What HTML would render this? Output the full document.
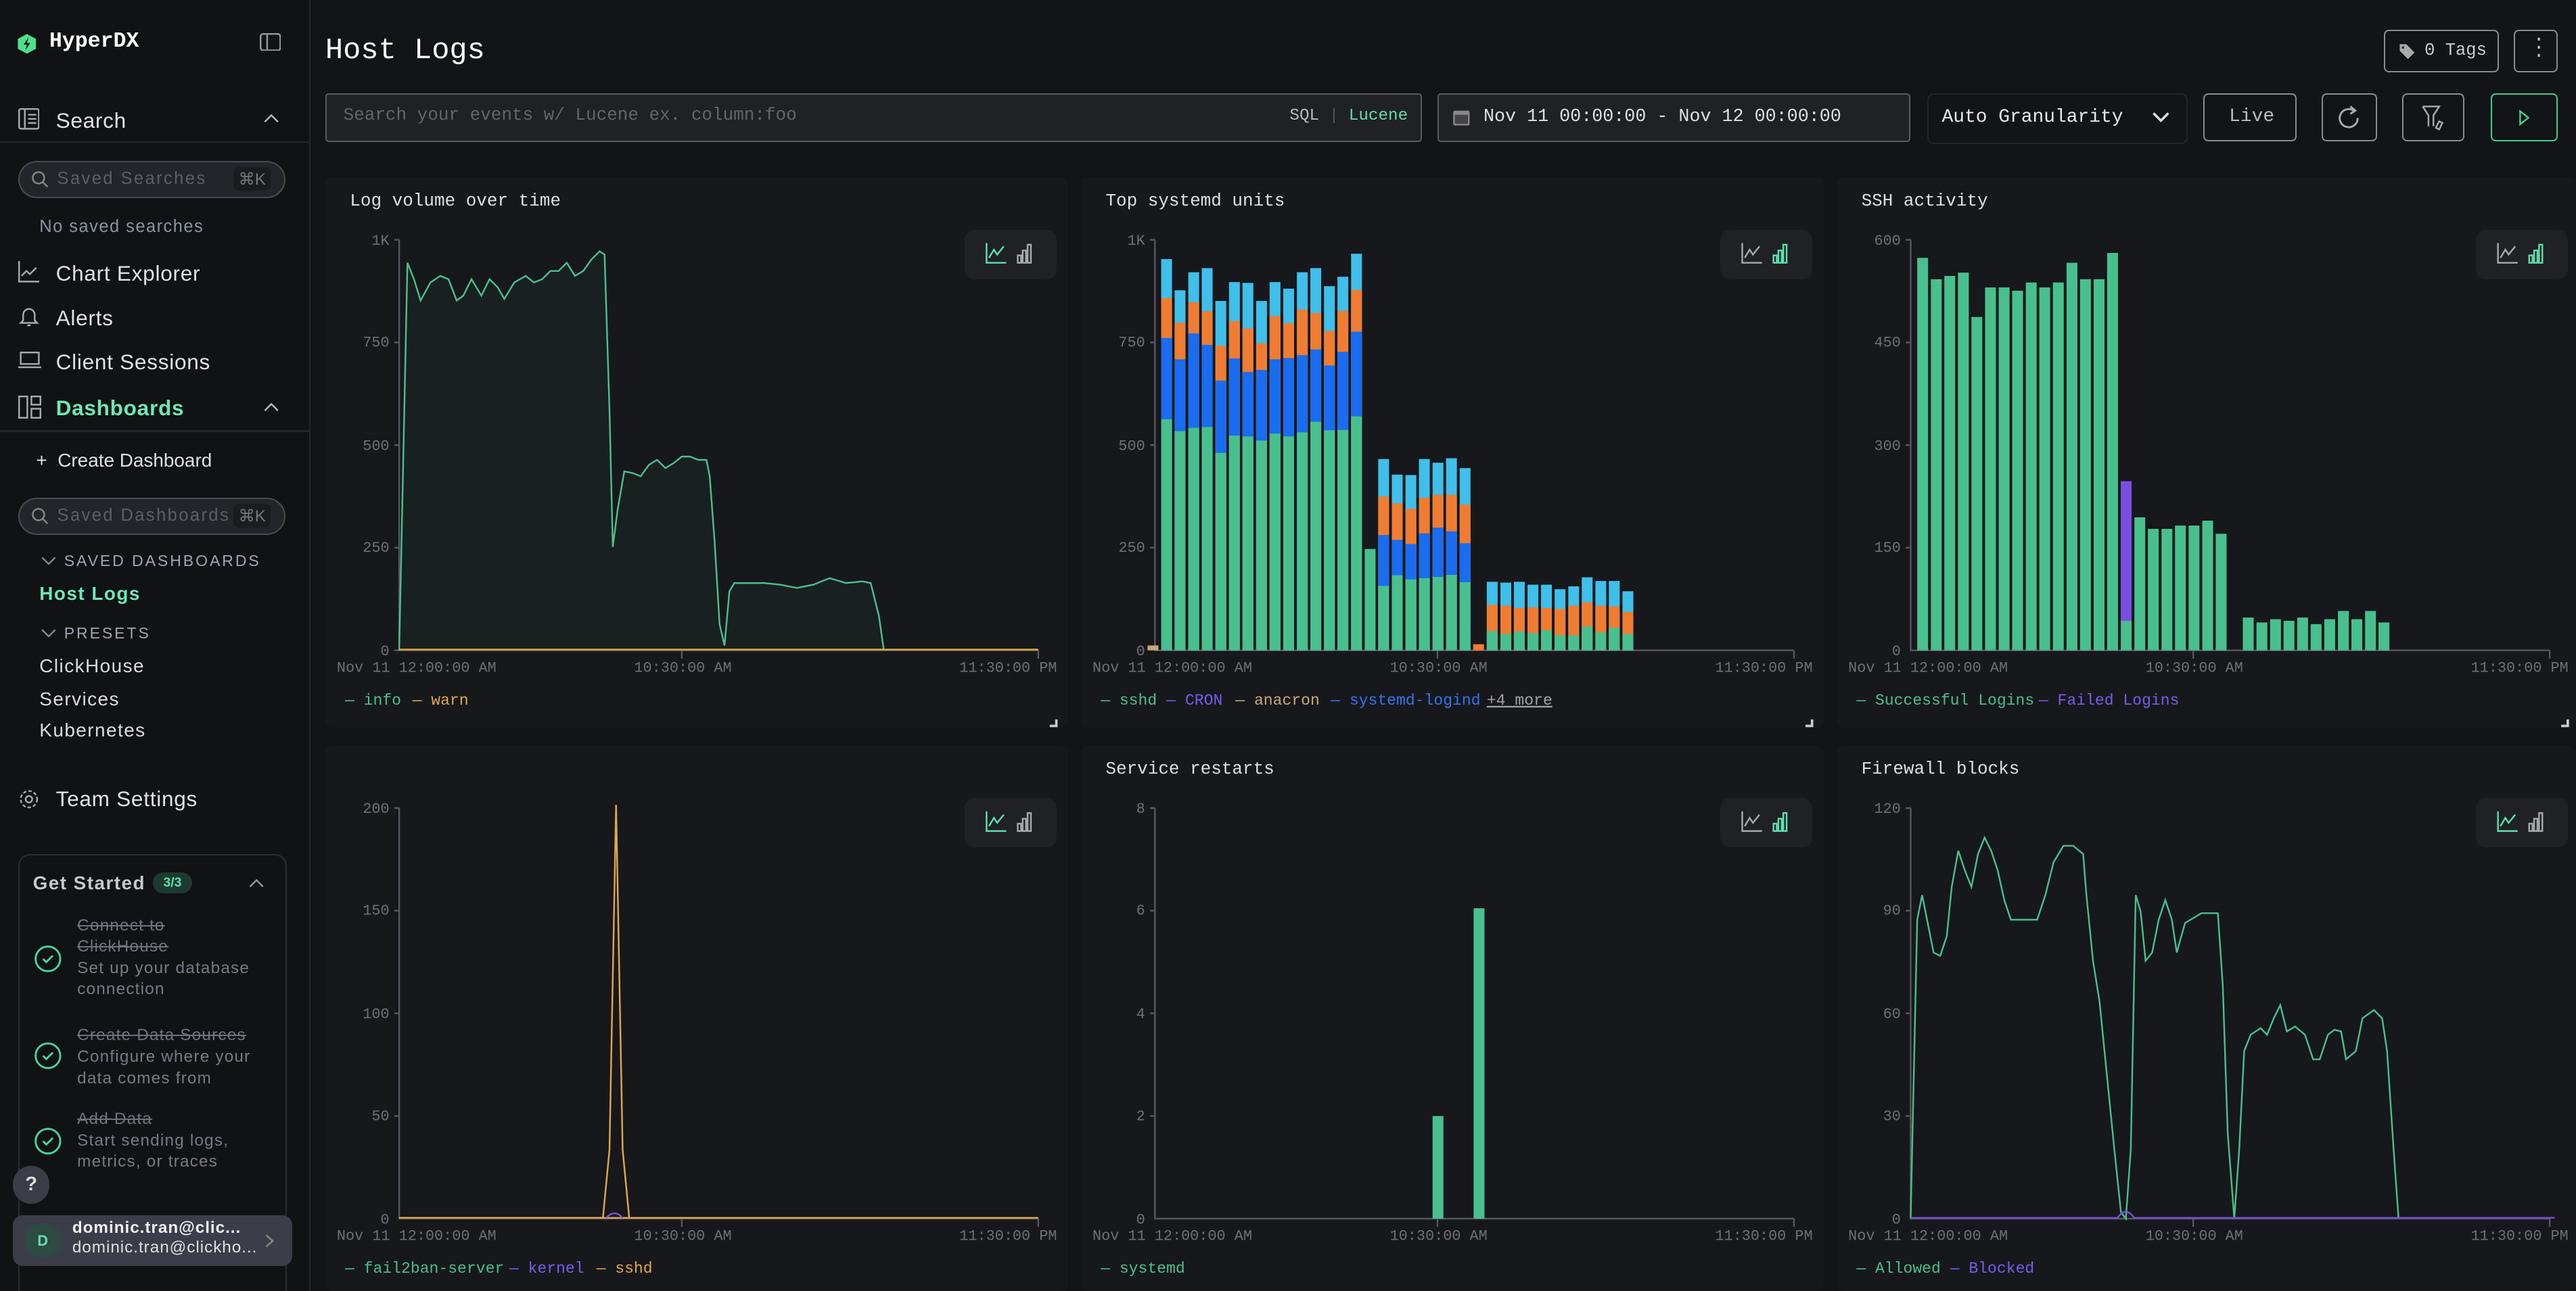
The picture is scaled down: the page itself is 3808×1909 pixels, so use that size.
<!DOCTYPE html>
<html><head><meta charset="utf-8">
<style>
html,body{margin:0;padding:0;background:#131417;overflow:hidden;width:3808px;height:1908px}
#w{position:absolute;left:0;top:0;width:1568px;height:786px;zoom:2.428571;background:#131417;font-family:"Liberation Mono",monospace;color:#ddd;overflow:hidden}
.a{position:absolute}
.sb{position:absolute;left:0;top:0;width:188px;height:786px;background:#111214;border-right:1px solid #25262a;font-family:"Liberation Sans",sans-serif;overflow:hidden}
.nav{position:absolute;left:34px;font-size:13px;color:#e2e2e2;letter-spacing:.3px}
.pill{position:absolute;left:11px;width:161px;height:21px;border:1px solid #4a4c53;border-radius:12px;background:#23252a}
.pill span{position:absolute;left:23px;top:4px;font-size:10.5px;color:#5c5f66;letter-spacing:1px}
.pill b{position:absolute;right:8px;top:3px;font-size:10px;color:#777;font-weight:normal;background:#1b1c20;padding:1px 3px;border-radius:3px}
.sm{position:absolute;font-size:11.5px;color:#ddd;letter-spacing:.6px}
.panel{position:absolute;background:#17181b;border-radius:4px}
.pt{position:absolute;font-size:10.7px;color:#e0e0e0}
.btn{position:absolute;border:1px solid #8a8b90;border-radius:3px;height:27px;box-sizing:border-box}
.ig{position:absolute;width:56px;height:30px;background:#1f2125;border-radius:6px}
.gi{position:absolute;left:47px;font-size:10px;color:#767b84;line-height:13px;letter-spacing:.5px}
.gi s{color:#6f737b}
</style></head><body><div id="w">

<div class="sb">
 <svg class="a" style="left:10px;top:20px" width="13" height="13" viewBox="0 0 13 13"><polygon points="6.5,0.5 12,3.5 12,9.5 6.5,12.5 1,9.5 1,3.5" fill="#4ee08f"/><path d="M7.5 2.5 L4.5 7 L6.5 7 L5.5 10.5 L8.5 6 L6.5 6 Z" fill="#111"/></svg>
 <div class="a" style="left:30px;top:18px;font-family:'Liberation Mono',monospace;font-weight:bold;font-size:13px;color:#fff">HyperDX</div>
 <svg class="a" style="left:158px;top:20px" width="13" height="11"><rect x=".5" y=".5" width="12" height="10" rx="1.5" fill="none" stroke="#999"/><line x1="4.5" y1="1" x2="4.5" y2="10" stroke="#999"/></svg>

 <svg class="a" style="left:11px;top:66px" width="13" height="13"><rect x=".5" y=".5" width="12" height="12" rx="1" fill="none" stroke="#aaa"/><line x1="4" y1="1" x2="4" y2="12" stroke="#aaa"/><path d="M6 4h5M6 6.5h5M6 9h5" stroke="#aaa"/></svg>
 <div class="nav" style="top:66px">Search</div>
 <svg class="a" style="left:160px;top:69px" width="10" height="6"><path d="M1 5l4-4 4 4" fill="none" stroke="#bbb"/></svg>
 <div class="a" style="left:0;top:86px;width:188px;height:1px;background:#25262a"></div>
 <div class="pill" style="top:98px"><svg class="a" style="left:7px;top:5px" width="11" height="11"><circle cx="4.5" cy="4.5" r="3.5" fill="none" stroke="#888"/><path d="M7 7l3 3" stroke="#888"/></svg><span>Saved Searches</span><b>⌘K</b></div>
 <div class="a" style="left:24px;top:132px;font-size:10.5px;color:#8a93a5;letter-spacing:.6px">No saved searches</div>

 <svg class="a" style="left:11px;top:159px" width="13" height="13"><path d="M.5 0v12.5H13" fill="none" stroke="#aaa"/><path d="M2 9l3-3 2 2 4-4" fill="none" stroke="#aaa"/></svg>
 <div class="nav" style="top:159px">Chart Explorer</div>
 <svg class="a" style="left:11px;top:186px" width="13" height="13"><path d="M3 9V5.5a3.5 3.5 0 017 0V9l1.5 1.5h-10z" fill="none" stroke="#aaa"/><path d="M5.5 12h2" stroke="#aaa"/></svg>
 <div class="nav" style="top:186px">Alerts</div>
 <svg class="a" style="left:11px;top:214px" width="14" height="11"><rect x="1.5" y=".5" width="11" height="7" fill="none" stroke="#aaa"/><path d="M0 9.5h14" stroke="#aaa"/></svg>
 <div class="nav" style="top:213px">Client Sessions</div>
 <svg class="a" style="left:11px;top:241px" width="14" height="14"><rect x=".5" y=".5" width="5" height="13" fill="none" stroke="#aaa"/><rect x="8" y=".5" width="5.5" height="5" fill="none" stroke="#aaa"/><rect x="8" y="8" width="5.5" height="5.5" fill="none" stroke="#aaa"/></svg>
 <div class="nav" style="top:241px;color:#6ee7b7;font-weight:bold">Dashboards</div>
 <svg class="a" style="left:160px;top:245px" width="10" height="6"><path d="M1 5l4-4 4 4" fill="none" stroke="#bbb"/></svg>
 <div class="a" style="left:0;top:262px;width:188px;height:1px;background:#25262a"></div>
 <div class="a" style="left:22px;top:274px;font-size:11.5px;color:#e0e0e0">+&nbsp; Create Dashboard</div>
 <div class="pill" style="top:303px"><svg class="a" style="left:7px;top:5px" width="11" height="11"><circle cx="4.5" cy="4.5" r="3.5" fill="none" stroke="#888"/><path d="M7 7l3 3" stroke="#888"/></svg><span>Saved Dashboards</span><b>⌘K</b></div>
 <svg class="a" style="left:25px;top:339px" width="9" height="5"><path d="M.5.5l4 4 4-4" fill="none" stroke="#888"/></svg>
 <div class="a" style="left:39px;top:336px;font-size:9.5px;color:#a0a6b2;letter-spacing:1.2px">SAVED DASHBOARDS</div>
 <div class="sm" style="left:24px;top:355px;color:#6ee7b7;font-weight:bold">Host Logs</div>
 <svg class="a" style="left:25px;top:383px" width="9" height="5"><path d="M.5.5l4 4 4-4" fill="none" stroke="#888"/></svg>
 <div class="a" style="left:39px;top:380px;font-size:9.5px;color:#a0a6b2;letter-spacing:1.2px">PRESETS</div>
 <div class="sm" style="left:24px;top:399px">ClickHouse</div>
 <div class="sm" style="left:24px;top:419px">Services</div>
 <div class="sm" style="left:24px;top:438px">Kubernetes</div>
 <svg class="a" style="left:11px;top:480px" width="13" height="13"><circle cx="6.5" cy="6.5" r="2" fill="none" stroke="#aaa"/><circle cx="6.5" cy="6.5" r="5" fill="none" stroke="#aaa" stroke-dasharray="2 1.3"/></svg>
 <div class="nav" style="top:479px">Team Settings</div>

 <div class="a" style="left:11px;top:520px;width:162px;height:280px;border:1px solid #2c2e33;border-radius:7px"></div>
 <div class="a" style="left:20px;top:531px;font-size:11.5px;font-weight:bold;color:#c8c8c8;letter-spacing:.6px">Get Started</div>
 <div class="a" style="left:93px;top:531px;width:24px;height:13px;border-radius:7px;background:#1d3a30;color:#5fe0ad;font-size:8px;font-weight:bold;text-align:center;line-height:13px">3/3</div>
 <svg class="a" style="left:151px;top:535px" width="10" height="6"><path d="M1 5l4-4 4 4" fill="none" stroke="#999"/></svg>
 <svg class="a" style="left:20px;top:575px" width="18" height="130"><g fill="none" stroke="#45d69c" stroke-width="1.2"><circle cx="9" cy="9" r="7.5"/><path d="M6 9l2 2 4-4"/><circle cx="9" cy="68" r="7.5"/><path d="M6 68l2 2 4-4"/><circle cx="9" cy="120" r="7.5"/><path d="M6 120l2 2 4-4"/></g></svg>
 <div class="gi" style="top:557px"><s>Connect to<br>ClickHouse</s><br>Set up your database<br>connection</div>
 <div class="gi" style="top:624px"><s>Create Data Sources</s><br>Configure where your<br>data comes from</div>
 <div class="gi" style="top:675px"><s>Add Data</s><br>Start sending logs,<br>metrics, or traces</div>
 <div class="a" style="left:8px;top:710px;width:22px;height:23px;border-radius:12px;background:#3a3d46;color:#ddd;font-weight:bold;font-size:12px;text-align:center;line-height:23px">?</div>
 <div class="a" style="left:8px;top:740px;width:170px;height:31px;border-radius:6px;background:#3b3e48"></div>
 <div class="a" style="left:15px;top:745px;width:22px;height:21px;border-radius:11px;background:#2d4a43;color:#5fe0ad;font-size:9px;font-weight:bold;text-align:center;line-height:21px">D</div>
 <div class="a" style="left:44px;top:742px;font-size:10px;font-weight:bold;color:#f0f0f0;letter-spacing:.4px">dominic.tran@clic...</div>
 <div class="a" style="left:44px;top:754px;font-size:10px;color:#e0e0e0;letter-spacing:.4px">dominic.tran@clickho...</div>
 <svg class="a" style="left:161px;top:751px" width="6" height="9"><path d="M1 1l4 3.5L1 8" fill="none" stroke="#888"/></svg>
</div>

<!-- header -->
<div class="a" style="left:198px;top:21px;font-size:18px;color:#fff">Host Logs</div>
<div class="btn" style="left:1451px;top:18px;width:70px;height:26px"><svg class="a" style="left:8px;top:7px" width="11" height="11"><path d="M1 1h4l5 5-4 4-5-5z" fill="#aaa"/><circle cx="3" cy="3" r=".8" fill="#333"/></svg><span class="a" style="left:24px;top:6px;font-size:10.5px;color:#ccc">0 Tags</span></div>
<div class="btn" style="left:1530px;top:18px;width:27px;height:26px"><span class="a" style="left:11px;top:3px;font-size:12px;color:#bbb;line-height:5px">·<br>·<br>·</span></div>

<div class="a" style="left:198px;top:57px;width:666px;height:28px;background:#202125;border:1px solid #5a5b61;border-radius:2px"></div>
<div class="a" style="left:209px;top:64px;font-size:10.7px;color:#62656c">Search your events w/ Lucene ex. column:foo</div>
<div class="a" style="left:785px;top:65px;font-size:10px;color:#bbb">SQL <span style="color:#555">|</span> <span style="color:#5fe0ad">Lucene</span></div>
<div class="a" style="left:875px;top:57px;width:286px;height:28px;background:#202125;border:1px solid #5a5b61;border-radius:2px"></div>
<svg class="a" style="left:884px;top:66px" width="11" height="11"><rect x=".5" y="1.5" width="10" height="9" rx="1" fill="#888"/><rect x="1.5" y="4" width="8" height="5.5" fill="#444"/></svg>
<div class="a" style="left:903px;top:65px;font-size:11px;color:#e0e0e0">Nov 11 00:00:00 - Nov 12 00:00:00</div>
<div class="a" style="left:1173px;top:57px;width:157px;height:29px;border:1px solid #232428;border-radius:4px;background:#131417"></div>
<div class="a" style="left:1182px;top:65px;font-size:11.5px;color:#e8e8e8">Auto Granularity</div>
<svg class="a" style="left:1310px;top:68px" width="11" height="7"><path d="M1 1l4.5 4.5L10 1" fill="none" stroke="#ddd" stroke-width="1.5"/></svg>
<div class="btn" style="left:1341px;top:57px;width:57px;height:29px"><span class="a" style="left:15px;top:7px;font-size:11.5px;color:#bbb">Live</span></div>
<div class="btn" style="left:1413px;top:57px;width:34px;height:29px"><svg class="a" style="left:9px;top:6px" width="15" height="16"><path d="M10 3.5A5.5 5.5 0 1 0 12.5 8" fill="none" stroke="#aaa" stroke-width="1.2"/><path d="M8 1l3 2.5-3 2" fill="none" stroke="#aaa" stroke-width="1.2"/></svg></div>
<div class="btn" style="left:1462px;top:57px;width:38px;height:29px"><svg class="a" style="left:11px;top:6px" width="16" height="17"><path d="M1 1h10L7.5 6.5V13" fill="none" stroke="#aaa"/><path d="M1 1l3.5 5.5V13" fill="none" stroke="#aaa"/><path d="M11 10l2 1-2 4-2-1z" fill="none" stroke="#aaa"/></svg></div>
<div class="btn" style="left:1516px;top:57px;width:41px;height:29px;border-color:#3ecf8e"><svg class="a" style="left:16px;top:9px" width="7" height="10"><path d="M1 1l5 4-5 4z" fill="none" stroke="#3ecf8e"/></svg></div>

<!-- panels -->
<div class="panel" style="left:198px;top:108px;width:452px;height:335px"></div>
<div class="panel" style="left:658px;top:108px;width:452px;height:335px"></div>
<div class="panel" style="left:1118px;top:108px;width:450px;height:335px"></div>
<div class="panel" style="left:198px;top:454px;width:452px;height:332px"></div>
<div class="panel" style="left:658px;top:454px;width:452px;height:332px"></div>
<div class="panel" style="left:1118px;top:454px;width:450px;height:332px"></div>
<div class="pt" style="left:213px;top:116px">Log volume over time</div>
<div class="pt" style="left:673px;top:116px">Top systemd units</div>
<div class="pt" style="left:1133px;top:116px">SSH activity</div>
<div class="pt" style="left:673px;top:462px">Service restarts</div>
<div class="pt" style="left:1133px;top:462px">Firewall blocks</div>

<div class="ig" style="left:587px;top:140px"></div><div class="ig" style="left:1047px;top:140px"></div><div class="ig" style="left:1507px;top:140px"></div>
<div class="ig" style="left:587px;top:486px"></div><div class="ig" style="left:1047px;top:486px"></div><div class="ig" style="left:1507px;top:486px"></div>

<svg class="a" style="left:0;top:0" width="1568" height="786" font-family="Liberation Mono, monospace">
<defs>
 <g id="ic"><path d="M.5 0v12h12" fill="none" stroke="#5fe0ad"/><path d="M2 9l3-5 2 3 4-5" fill="none" stroke="#5fe0ad"/><g fill="none" stroke="#aaa"><rect x="19.5" y="7.5" width="2" height="4.5"/><rect x="22.5" y="4.5" width="2" height="7.5"/><rect x="25.5" y="1" width="2" height="11"/></g></g>
 <g id="ic2"><path d="M.5 0v12h12" fill="none" stroke="#aaa"/><path d="M2 9l3-5 2 3 4-5" fill="none" stroke="#aaa"/><g fill="none" stroke="#5fe0ad"><rect x="19.5" y="7.5" width="2" height="4.5"/><rect x="22.5" y="4.5" width="2" height="7.5"/><rect x="25.5" y="1" width="2" height="11"/></g></g>
 <g id="ax" font-size="9" fill="#6d7078"><path d="M243 146h-3M243 146V396h389M415 396v5M632 396v5" fill="none" stroke="#55585e"/>
  <text x="205" y="409">Nov 11 12:00:00 AM</text><text x="386" y="409">10:30:00 AM</text><text x="584" y="409">11:30:00 PM</text></g>
</defs>
<use href="#ic" x="600" y="148"/><use href="#ic2" x="1060" y="148"/><use href="#ic2" x="1520" y="148"/>
<use href="#ic" x="600" y="494"/><use href="#ic2" x="1060" y="494"/><use href="#ic" x="1520" y="494"/>

<use href="#ax"/><use href="#ax" x="460"/><use href="#ax" x="920"/>
<use href="#ax" y="346"/><use href="#ax" x="460" y="346"/><use href="#ax" x="920" y="346"/>
<g font-size="9" fill="#6d7078" text-anchor="end">
 <text x="237" y="149">1K</text><text x="237" y="211">750</text><text x="237" y="274">500</text><text x="237" y="336">250</text><text x="237" y="399">0</text>
 <text x="697" y="149">1K</text><text x="697" y="211">750</text><text x="697" y="274">500</text><text x="697" y="336">250</text><text x="697" y="399">0</text>
 <text x="1157" y="149">600</text><text x="1157" y="211">450</text><text x="1157" y="274">300</text><text x="1157" y="336">150</text><text x="1157" y="399">0</text>
 <text x="237" y="495">200</text><text x="237" y="557">150</text><text x="237" y="620">100</text><text x="237" y="682">50</text><text x="237" y="745">0</text>
 <text x="697" y="495">8</text><text x="697" y="557">6</text><text x="697" y="620">4</text><text x="697" y="682">2</text><text x="697" y="745">0</text>
 <text x="1157" y="495">120</text><text x="1157" y="557">90</text><text x="1157" y="620">60</text><text x="1157" y="682">30</text><text x="1157" y="745">0</text>
</g>
<g stroke="#55585e"><path d="M240 208.5h3M240 271h3M240 333.5h3M240 396h3M700 208.5h3M700 271h3M700 333.5h3M700 146h3M1160 146h3M1160 208.5h3M1160 271h3M1160 333.5h3M240 492h3M240 554.5h3M240 617h3M240 679.5h3M700 492h3M700 554.5h3M700 617h3M700 679.5h3M1160 492h3M1160 554.5h3M1160 617h3M1160 679.5h3"/></g>

<path d="M243,396 L248,160 252,170 256,183 262,172 268,168 273,170 278,183 282,180 287,170 293,180 298,170 303,175 307,182 313,172 320,168 325,172 330,170 335,165 340,165 345,160 350,168 355,165 360,158 365,153 368,155 371,250 373,333 376,310 380,287 385,288 390,290 395,283 400,280 405,285 410,282 415,278 420,278 425,280 430,280 432,290 435,330 438,380 441,393 444,360 447,355 455,355 465,355 475,356 485,358 495,356 505,352 515,355 525,354 530,355 535,375 538,396 Z" fill="#4bc08f" fill-opacity=".05" stroke="none"/>
<path d="M243,396 L248,160 252,170 256,183 262,172 268,168 273,170 278,183 282,180 287,170 293,180 298,170 303,175 307,182 313,172 320,168 325,172 330,170 335,165 340,165 345,160 350,168 355,165 360,158 365,153 368,155 371,250 373,333 376,310 380,287 385,288 390,290 395,283 400,280 405,285 410,282 415,278 420,278 425,280 430,280 432,290 435,330 438,380 441,393 444,360 447,355 455,355 465,355 475,356 485,358 495,356 505,352 515,355 525,354 530,355 535,375 538,396" fill="none" stroke="#4bc08f" stroke-width="1"/>
<path d="M243 395.5H632" stroke="#e0a84a" stroke-width="1"/>

<g transform="translate(-5.5,0)">
<g fill="#3fbfea">
<rect x="712.3" y="157.75" width="6.6" height="238.25"/><rect x="720.5" y="176.75" width="6.6" height="219.25"/><rect x="728.8" y="165.75" width="6.6" height="230.25"/><rect x="737" y="163.25" width="6.6" height="232.75"/><rect x="745.3" y="183.25" width="6.6" height="212.75"/><rect x="753.6" y="171.75" width="6.6" height="224.25"/><rect x="761.8" y="172.25" width="6.6" height="223.75"/><rect x="770.1" y="183.25" width="6.6" height="212.75"/><rect x="778.3" y="171.75" width="6.6" height="224.25"/><rect x="786.6" y="175.75" width="6.6" height="220.25"/><rect x="794.9" y="165.75" width="6.6" height="230.25"/><rect x="803.1" y="163.25" width="6.6" height="232.75"/><rect x="811.4" y="174.25" width="6.6" height="221.75"/><rect x="819.6" y="168.5" width="6.6" height="227.5"/><rect x="827.9" y="154.5" width="6.6" height="241.5"/>
<rect x="844.4" y="279.5" width="6.6" height="116.5"/><rect x="852.7" y="289" width="6.6" height="107"/><rect x="861" y="289.25" width="6.6" height="106.75"/><rect x="869.2" y="279.5" width="6.6" height="116.5"/><rect x="877.5" y="281.75" width="6.6" height="114.25"/><rect x="885.7" y="279" width="6.6" height="117"/><rect x="894" y="285" width="6.6" height="111"/>
<rect x="910.5" y="354.25" width="6.6" height="41.75"/><rect x="918.8" y="354.75" width="6.6" height="41.25"/><rect x="927" y="354.25" width="6.6" height="41.75"/><rect x="935.3" y="356" width="6.6" height="40"/><rect x="943.5" y="356" width="6.6" height="40"/><rect x="951.8" y="358.75" width="6.6" height="37.25"/><rect x="960.1" y="357" width="6.6" height="39"/><rect x="968.3" y="351.5" width="6.6" height="44.5"/><rect x="976.6" y="353.75" width="6.6" height="42.25"/><rect x="984.8" y="353.75" width="6.6" height="42.25"/><rect x="993.1" y="360" width="6.6" height="36"/>
</g>
<g fill="#f07c32">
<rect x="712.3" y="181.5" width="6.6" height="214.5"/><rect x="720.5" y="196.5" width="6.6" height="199.5"/><rect x="728.8" y="184" width="6.6" height="212"/><rect x="737" y="189.5" width="6.6" height="206.5"/><rect x="745.3" y="210.5" width="6.6" height="185.5"/><rect x="753.6" y="195.5" width="6.6" height="200.5"/><rect x="761.8" y="200" width="6.6" height="196"/><rect x="770.1" y="209" width="6.6" height="187"/><rect x="778.3" y="192.5" width="6.6" height="203.5"/><rect x="786.6" y="196.75" width="6.6" height="199.25"/><rect x="794.9" y="188.5" width="6.6" height="207.5"/><rect x="803.1" y="190.5" width="6.6" height="205.5"/><rect x="811.4" y="201.5" width="6.6" height="194.5"/><rect x="819.6" y="189.25" width="6.6" height="206.75"/><rect x="827.9" y="176.5" width="6.6" height="219.5"/>
<rect x="844.4" y="302.25" width="6.6" height="93.75"/><rect x="852.7" y="306.5" width="6.6" height="89.5"/><rect x="861" y="309.75" width="6.6" height="86.25"/><rect x="869.2" y="303" width="6.6" height="93"/><rect x="877.5" y="301.25" width="6.6" height="94.75"/><rect x="885.7" y="301.25" width="6.6" height="94.75"/><rect x="894" y="307.25" width="6.6" height="88.75"/>
<rect x="902.2" y="392.25" width="6.6" height="3.75"/>
<rect x="910.5" y="368.25" width="6.6" height="27.75"/><rect x="918.8" y="368.75" width="6.6" height="27.25"/><rect x="927" y="370.25" width="6.6" height="25.75"/><rect x="935.3" y="369.75" width="6.6" height="26.25"/><rect x="943.5" y="370.25" width="6.6" height="25.75"/><rect x="951.8" y="370.75" width="6.6" height="25.25"/><rect x="960.1" y="368.75" width="6.6" height="27.25"/><rect x="968.3" y="366.75" width="6.6" height="29.25"/><rect x="976.6" y="368.75" width="6.6" height="27.25"/><rect x="984.8" y="369.25" width="6.6" height="26.75"/><rect x="993.1" y="372.5" width="6.6" height="23.5"/>
</g>
<g fill="#1a6cf0">
<rect x="712.3" y="205.75" width="6.6" height="190.25"/><rect x="720.5" y="218.75" width="6.6" height="177.25"/><rect x="728.8" y="203" width="6.6" height="193"/><rect x="737" y="210" width="6.6" height="186"/><rect x="745.3" y="231.75" width="6.6" height="164.25"/><rect x="753.6" y="218.25" width="6.6" height="177.75"/><rect x="761.8" y="226.5" width="6.6" height="169.5"/><rect x="770.1" y="225.25" width="6.6" height="170.75"/><rect x="778.3" y="218.75" width="6.6" height="177.25"/><rect x="786.6" y="218" width="6.6" height="178"/><rect x="794.9" y="216.25" width="6.6" height="179.75"/><rect x="803.1" y="212.75" width="6.6" height="183.25"/><rect x="811.4" y="222.5" width="6.6" height="173.5"/><rect x="819.6" y="214.25" width="6.6" height="181.75"/><rect x="827.9" y="202" width="6.6" height="194"/>
<rect x="844.4" y="325.75" width="6.6" height="70.25"/><rect x="852.7" y="328.75" width="6.6" height="67.25"/><rect x="861" y="331.25" width="6.6" height="64.75"/><rect x="869.2" y="324.75" width="6.6" height="71.25"/><rect x="877.5" y="321.25" width="6.6" height="74.75"/><rect x="885.7" y="323.5" width="6.6" height="72.5"/><rect x="894" y="330.75" width="6.6" height="65.25"/>
</g>
<g fill="#48c08e">
<rect x="712.3" y="255.25" width="6.6" height="140.75"/><rect x="720.5" y="262.5" width="6.6" height="133.5"/><rect x="728.8" y="260.5" width="6.6" height="135.5"/><rect x="737" y="260" width="6.6" height="136"/><rect x="745.3" y="275.75" width="6.6" height="120.25"/><rect x="753.6" y="265.25" width="6.6" height="130.75"/><rect x="761.8" y="265.75" width="6.6" height="130.25"/><rect x="770.1" y="268.25" width="6.6" height="127.75"/><rect x="778.3" y="264" width="6.6" height="132"/><rect x="786.6" y="265.75" width="6.6" height="130.25"/><rect x="794.9" y="263.25" width="6.6" height="132.75"/><rect x="803.1" y="256.75" width="6.6" height="139.25"/><rect x="811.4" y="262" width="6.6" height="134"/><rect x="819.6" y="261.75" width="6.6" height="134.25"/><rect x="827.9" y="253.5" width="6.6" height="142.5"/>
<rect x="836.2" y="334.25" width="6.6" height="61.75"/>
<rect x="844.4" y="356.75" width="6.6" height="39.25"/><rect x="852.7" y="350.25" width="6.6" height="45.75"/><rect x="861" y="352.75" width="6.6" height="43.25"/><rect x="869.2" y="352" width="6.6" height="44"/><rect x="877.5" y="351.25" width="6.6" height="44.75"/><rect x="885.7" y="350" width="6.6" height="46"/><rect x="894" y="354.5" width="6.6" height="41.5"/>
<rect x="910.5" y="384.25" width="6.6" height="11.75"/><rect x="918.8" y="386" width="6.6" height="10"/><rect x="927" y="384.5" width="6.6" height="11.5"/><rect x="935.3" y="385.5" width="6.6" height="10.5"/><rect x="943.5" y="383.75" width="6.6" height="12.25"/><rect x="951.8" y="386.75" width="6.6" height="9.25"/><rect x="960.1" y="386.75" width="6.6" height="9.25"/><rect x="968.3" y="381.5" width="6.6" height="14.5"/><rect x="976.6" y="385" width="6.6" height="11"/><rect x="984.8" y="382.25" width="6.6" height="13.75"/><rect x="993.1" y="386" width="6.6" height="10"/>
</g>
<rect x="704" y="393" width="6.6" height="3" fill="#c8a878"/>
</g>

<g fill="#48c08e">
<rect x="1167" y="157" width="6.6" height="239"/><rect x="1175.3" y="170" width="6.6" height="226"/><rect x="1183.5" y="168" width="6.6" height="228"/><rect x="1191.8" y="166" width="6.6" height="230"/><rect x="1200" y="193" width="6.6" height="203"/><rect x="1208.3" y="175" width="6.6" height="221"/><rect x="1216.6" y="175" width="6.6" height="221"/><rect x="1224.8" y="177" width="6.6" height="219"/><rect x="1233.1" y="172" width="6.6" height="224"/><rect x="1241.3" y="175" width="6.6" height="221"/><rect x="1249.6" y="172" width="6.6" height="224"/><rect x="1257.9" y="160" width="6.6" height="236"/><rect x="1266.1" y="170" width="6.6" height="226"/><rect x="1274.4" y="170" width="6.6" height="226"/><rect x="1282.6" y="154" width="6.6" height="242"/><rect x="1290.9" y="378" width="6.6" height="18"/><rect x="1299.2" y="315" width="6.6" height="81"/><rect x="1307.4" y="322" width="6.6" height="74"/><rect x="1315.7" y="322" width="6.6" height="74"/><rect x="1323.9" y="320" width="6.6" height="76"/><rect x="1332.2" y="320" width="6.6" height="76"/><rect x="1340.5" y="317" width="6.6" height="79"/><rect x="1348.7" y="325" width="6.6" height="71"/>
<rect x="1365.2" y="376" width="6.6" height="20"/><rect x="1373.5" y="379" width="6.6" height="17"/><rect x="1381.8" y="377" width="6.6" height="19"/><rect x="1390" y="378" width="6.6" height="18"/><rect x="1398.3" y="376" width="6.6" height="20"/><rect x="1406.5" y="380" width="6.6" height="16"/><rect x="1414.8" y="377" width="6.6" height="19"/><rect x="1423.1" y="372" width="6.6" height="24"/><rect x="1431.3" y="377" width="6.6" height="19"/><rect x="1439.6" y="372" width="6.6" height="24"/><rect x="1447.8" y="379" width="6.6" height="17"/>
</g>
<rect x="1290.9" y="293" width="6.6" height="85" fill="#7a4fe0"/>

<path d="M243 741.5H632" stroke="#e0a84a"/>
<path d="M243 741.5H367L371 700 375 490 379 700 383 741.5" fill="none" stroke="#e0a84a"/>
<path d="M369 741.5Q374 736 379 741.5" fill="none" stroke="#7a4fe0"/>
<rect x="872" y="679.5" width="6.6" height="62.5" fill="#48c08e"/>
<rect x="897" y="553" width="6.6" height="189" fill="#48c08e"/>
<path d="M1163,742 L1167,560 1170,545 1173,560 1177,580 1181,582 1185,570 1188,540 1192,518 1196,530 1200,540 1204,520 1208,510 1212,518 1216,530 1220,548 1224,560 1232,560 1240,560 1245,545 1250,525 1256,515 1262,515 1268,520 1270,545 1274,585 1278,610 1282,650 1287,700 1291,738 1294,742 1297,700 1300,545 1303,555 1306,585 1310,580 1314,560 1318,548 1322,560 1325,580 1330,562 1340,556 1350,556 1353,600 1356,690 1360,742 1363,700 1366,640 1370,630 1376,626 1380,630 1384,620 1388,612 1392,628 1397,625 1403,630 1408,645 1412,645 1417,630 1421,627 1425,628 1428,645 1434,640 1438,620 1445,615 1450,620 1453,640 1457,700 1460,742" fill="none" stroke="#48c08e"/>
<path d="M1163 741.5H1289Q1294 734 1299 741.5H1555" fill="none" stroke="#7a4fe0"/>

<g font-size="9.5">
<text x="210" y="429" fill="#48c08e">— info</text><text x="251" y="429" fill="#e0a84a">— warn</text>
<text x="670" y="429" fill="#48c08e">— sshd</text><text x="710" y="429" fill="#7a5af0">— CRON</text><text x="752" y="429" fill="#c8a878">— anacron</text><text x="810" y="429" fill="#2f75f0">— systemd-logind</text><text x="905" y="429" fill="#a0a3aa" text-decoration="underline">+4 more</text>
<text x="1130" y="429" fill="#48c08e">— Successful Logins</text><text x="1241" y="429" fill="#7a5af0">— Failed Logins</text>
<text x="210" y="775" fill="#48c08e">— fail2ban-server</text><text x="310" y="775" fill="#7a5af0">— kernel</text><text x="363" y="775" fill="#e0a84a">— sshd</text>
<text x="670" y="775" fill="#48c08e">— systemd</text>
<text x="1130" y="775" fill="#48c08e">— Allowed</text><text x="1187" y="775" fill="#7a5af0">— Blocked</text>
</g>
<path d="M643 438v4h-4M1103 438v4h-4M1563 438v4h-4" fill="none" stroke="#ccc" stroke-width="1.5"/>
</svg>
</div></body></html>
